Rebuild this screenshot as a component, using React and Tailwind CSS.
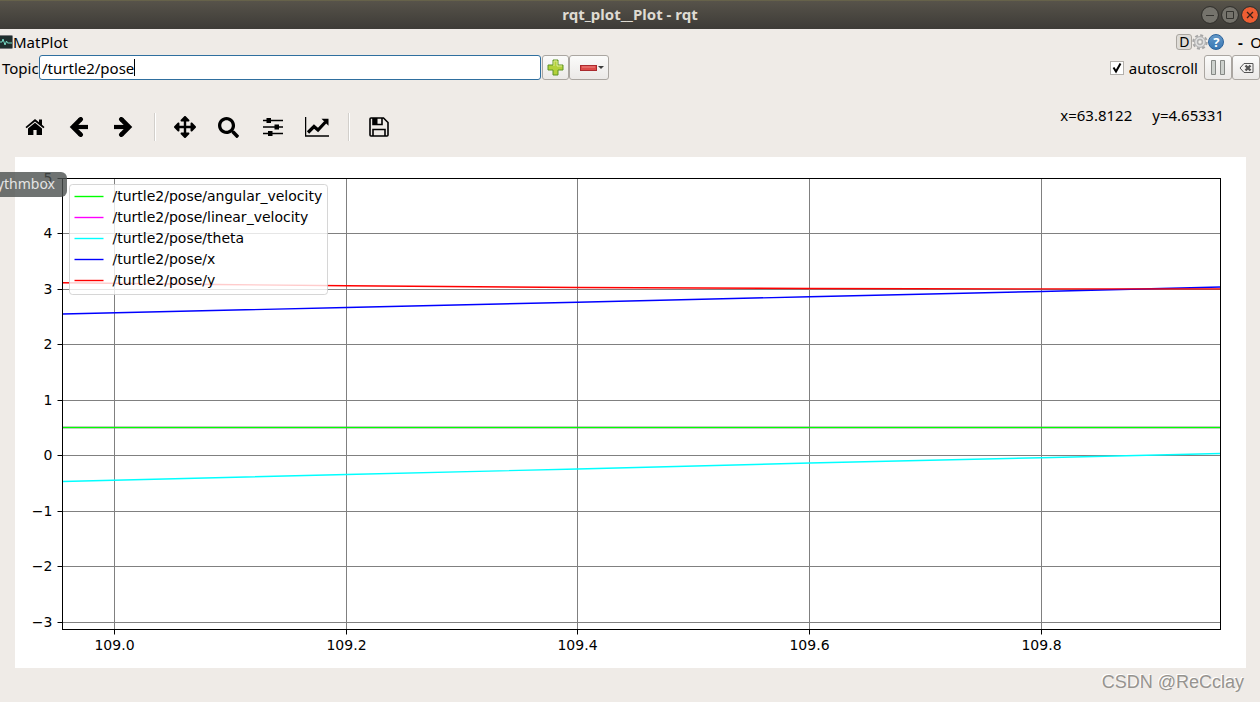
import { FaArrowsAlt, FaSearch } from 'react-icons/fa';

const xTicks = [
  { label: '109.0', x: 99 },
  { label: '109.2', x: 331 },
  { label: '109.4', x: 562 },
  { label: '109.6', x: 794 },
  { label: '109.8', x: 1026 },
];

const yTicks = [
  { label: '5', y: 21 },
  { label: '4', y: 76 },
  { label: '3', y: 132 },
  { label: '2', y: 187 },
  { label: '1', y: 243 },
  { label: '0', y: 298 },
  { label: '−1', y: 354 },
  { label: '−2', y: 409 },
  { label: '−3', y: 465 },
];

const series = [
  { name: '/turtle2/pose/linear_velocity', color: '#ff00ff', points: '47,270 1205,270' },
  { name: '/turtle2/pose/angular_velocity', color: '#00ff00', points: '47,270 1205,270' },
  { name: '/turtle2/pose/theta', color: '#00ffff', points: '47,324 331,317 562,311.5 794,305.5 1026,300.2 1205,296' },
  { name: '/turtle2/pose/x', color: '#0000ff', points: '47,156.5 331,150 562,144.7 794,139.2 1026,134 1205,129.5' },
  { name: '/turtle2/pose/y', color: '#ff0000', points: '47,125.3 200,127 331,128.2 562,130 794,131 1026,131.4 1205,131.4' },
];

const legend = [
  { name: '/turtle2/pose/angular_velocity', color: '#00ff00' },
  { name: '/turtle2/pose/linear_velocity', color: '#ff00ff' },
  { name: '/turtle2/pose/theta', color: '#00ffff' },
  { name: '/turtle2/pose/x', color: '#0000ff' },
  { name: '/turtle2/pose/y', color: '#ff0000' },
];

function HomeIcon() {
  return (
    <svg width="20" height="18" viewBox="0 0 20 18">
      <path d="M10 1 L0.5 9 L1.6 10.2 L10 3.4 L18.4 10.2 L19.5 9 L17 6.8 V1.5 H14 V4.3 Z" />
      <path d="M10 4.8 L3 10.4 V17 H8.4 V12 H11.6 V17 H17 V10.4 Z" />
    </svg>
  );
}

function ArrowIcon({ className }) {
  return (
    <svg className={className} width="20" height="20" viewBox="0 0 20 20" fill="none" stroke="#000" strokeWidth="4.6">
      <path d="M3 10H19" strokeWidth="4.2" />
      <path d="M11.8 2.2L4 10L11.8 17.8" />
      <path d="M11.6 2.4L11.8 2.2M11.6 17.6L11.8 17.8" strokeLinecap="round" strokeWidth="4.4" />
    </svg>
  );
}

function SlidersIcon() {
  return (
    <svg width="20" height="18" viewBox="0 0 20 18">
      <path d="M0 2.5H20M0 9H20M0 15.5H20" stroke="#000" strokeWidth="1.5" />
      <path d="M3.5 0h4.5v5H3.5zM11.5 6.5H16v5h-4.5zM5 13h4.5v5H5z" />
    </svg>
  );
}

function ChartIcon() {
  return (
    <svg width="24" height="20" viewBox="0 0 24 20" fill="none" stroke="#000">
      <path d="M0.5 0V19H24" strokeWidth="1.5" />
      <path d="M3 15.5 L9 9.5 L13 13 L20.5 5" strokeWidth="3.2" />
      <path d="M16.5 1.8H23.5V8.8Z" fill="#000" stroke="none" />
    </svg>
  );
}

function SaveIcon() {
  return (
    <svg width="20" height="20" viewBox="0 0 20 20" fill="none" stroke="#000" strokeWidth="1.6">
      <path d="M1 2Q1 1 2 1H14.5L19 5.5V18Q19 19 18 19H2Q1 19 1 18Z" />
      <path d="M4 1V7.5H13V1M4 19V12.5H16V19" />
      <path d="M4 1H8.5V7H4Z" fill="#000" stroke="none" />
    </svg>
  );
}

function TitleBar() {
  return (
    <header className="grid h-[29px] grid-cols-[1fr_auto_1fr] items-center border-t border-[#66624a] bg-gradient-to-b from-[#57534a] to-[#3d3b37]">
      <span />
      <h1 className="pb-0.5 text-[15px] leading-5 font-bold text-[#dfdbd2]">rqt_plot__Plot - rqt</h1>
      <div className="flex justify-end gap-1 pr-0.5 pb-px">
        <button aria-label="Minimize" className="flex size-4 items-center justify-center rounded-full bg-[#75736c] outline outline-[#33322e]">
          <svg width="16" height="16" viewBox="0 0 16 16" stroke="#33322e"><path d="M4 8.5h8" /></svg>
        </button>
        <button aria-label="Maximize" className="flex size-4 items-center justify-center rounded-full bg-[#75736c] outline outline-[#33322e]">
          <svg width="16" height="16" viewBox="0 0 16 16" fill="none" stroke="#33322e"><path d="M4.5 4.5h7v7h-7z" /></svg>
        </button>
        <button aria-label="Close" className="flex size-4 items-center justify-center rounded-full bg-[#ee5e33] outline outline-[#33322e]">
          <svg width="16" height="16" viewBox="0 0 16 16" stroke="#3a2018" strokeWidth="1.3"><path d="M5 5l6 6M11 5l-6 6" /></svg>
        </button>
      </div>
    </header>
  );
}

function DockBar() {
  return (
    <div className="flex h-[26px] items-center">
      <svg className="-ml-1 shrink-0" width="17" height="14" viewBox="0 0 17 14">
        <rect x="0.5" y="0.5" width="16" height="13" rx="1" fill="#1f2e2e" stroke="#77777a" />
        <path d="M1 7h5l1-3 2 6 1.5-4 1 2H16" fill="none" stroke="#76d8c4" />
      </svg>
      <h2 className="text-[15px] leading-5">MatPlot</h2>
      <div className="ml-auto flex items-center">
        <button className="flex size-4 items-center justify-center rounded-[3px] border border-[#aaa6a0] bg-[#dfdcd8] text-[14px] leading-4">D</button>
        <button aria-label="Settings">
          <svg width="16" height="16" viewBox="0 0 16 16" fill="none">
            <circle cx="8" cy="8" r="6.7" stroke="#a6a6a6" strokeWidth="2" strokeDasharray="3 2.26" />
            <circle cx="8" cy="8" r="5.4" fill="#dedede" stroke="#acacac" />
            <circle cx="8" cy="8" r="2.4" fill="#f0eeea" stroke="#b0b0b0" strokeWidth="1.5" />
          </svg>
        </button>
        <button aria-label="Help" className="flex size-4 items-center justify-center rounded-full border border-[#2a629b] bg-gradient-to-b from-[#6398c8] to-[#3a78b4] text-[13px] leading-4 font-bold text-white">?</button>
        <button className="ml-3 w-2 text-[15px] leading-5 font-bold">-</button>
        <button className="-mr-0.5 ml-1.5 text-[15px] leading-5">O</button>
      </div>
    </div>
  );
}

function TopicBar() {
  return (
    <div className="flex h-[25px] items-center pl-0.5">
      <label htmlFor="topic" className="w-[37px] text-[15px] leading-5">Topic</label>
      <div className="flex h-[25px] w-[502px] items-center rounded-[3px] border border-[#2f6f9f] bg-white pl-0.5">
        <input id="topic" type="text" defaultValue="/turtle2/pose" className="field-sizing-content text-[15px] leading-5 outline-none" />
        <span className="h-[17px] w-px bg-black" />
      </div>
      <button aria-label="Add topic" className="ml-px flex h-[25px] w-[27px] items-center justify-center rounded-[3px] border border-[#aaa6a1] bg-gradient-to-b from-[#fbfbfa] to-[#ebe9e7]">
        <svg width="17" height="17" viewBox="0 0 17 17">
          <path d="M6 1h5v5h5v5h-5v5H6v-5H1V6h5z" fill="#b3d13a" stroke="#5f9424" strokeLinejoin="round" />
          <path d="M7 7V2h3v5h5" fill="none" stroke="#dbea94" />
        </svg>
      </button>
      <button aria-label="Remove topic" className="flex h-[25px] w-10 items-center justify-end rounded-[3px] border border-[#aaa6a1] bg-gradient-to-b from-[#fbfbfa] to-[#ebe9e7] pr-1">
        <svg width="17" height="6" viewBox="0 0 17 6">
          <rect x="0.5" y="0.5" width="16" height="5" fill="#dc4a48" stroke="#a92a2e" />
          <path d="M2 2h13" stroke="#ee8582" />
        </svg>
        <svg className="ml-px" width="6" height="6" viewBox="0 0 6 6"><path d="M0 1h6L3 4z" fill="#3c3c3c" /></svg>
      </button>

      <div className="ml-auto flex items-center">
        <span className="grid size-[14px]">
          <input id="autoscroll" type="checkbox" defaultChecked className="col-start-1 row-start-1 size-[14px] appearance-none border border-[#b3b0ac] bg-white" />
          <svg className="pointer-events-none col-start-1 row-start-1" width="14" height="14" viewBox="0 0 14 14" fill="none" stroke="#000" strokeWidth="2">
            <path d="M3.5 6.5l2.5 4 4.5-8" />
          </svg>
        </span>
        <label htmlFor="autoscroll" className="ml-[5px] text-[15px] leading-5">autoscroll</label>
        <button aria-label="Pause" className="ml-1.5 flex h-[25px] w-7 items-center justify-center rounded-[3px] border border-[#aaa6a1] bg-gradient-to-b from-[#fbfbfa] to-[#ebe9e7]">
          <svg width="16" height="15" viewBox="0 0 16 15" fill="#cdd1cd" stroke="#858885">
            <path d="M1.5 0.5h4v14h-4zM10.5 0.5h4v14h-4z" />
          </svg>
        </button>
        <button aria-label="Clear plot" className="flex h-[25px] w-7 items-center justify-center rounded-[3px] border border-[#aaa6a1] bg-gradient-to-b from-[#fbfbfa] to-[#ebe9e7]">
          <svg width="15" height="12" viewBox="0 0 15 12" fill="none" stroke="#555">
            <path d="M5 1.5h9v9H5L1 6z" />
            <path d="M6.5 3.5l5 5M11.5 3.5l-5 5" strokeWidth="2.4" />
          </svg>
        </button>
      </div>
    </div>
  );
}

function PlotToolbar() {
  return (
    <div className="flex h-[77px] items-start justify-between pt-[25px] pr-9 pl-[25px]">
      <div className="flex h-11 items-center">
        <button aria-label="Home"><HomeIcon /></button>
        <button aria-label="Back" className="ml-6"><ArrowIcon /></button>
        <button aria-label="Forward" className="ml-6"><ArrowIcon className="rotate-180" /></button>
        <span className="ml-[21px] h-7 w-0.5 border-l border-[#d2cfcb] bg-white" />
        <button aria-label="Pan" className="ml-[18px]"><FaArrowsAlt size={22} /></button>
        <button aria-label="Zoom" className="ml-[22px]"><FaSearch size={21} /></button>
        <button aria-label="Subplots" className="ml-6"><SlidersIcon /></button>
        <button aria-label="Axes" className="ml-[22px]"><ChartIcon /></button>
        <span className="ml-[19px] h-7 w-0.5 border-l border-[#d2cfcb] bg-white" />
        <button aria-label="Save" className="ml-[19px]"><SaveIcon /></button>
      </div>
      <p className="flex gap-5 text-[15px] leading-5">
        <span>x=63.8122</span>
        <span>y=4.65331</span>
      </p>
    </div>
  );
}

function Plot() {
  return (
    <svg className="block h-auto w-full bg-white" viewBox="0 0 1231 511" fontFamily="'DejaVu Sans', sans-serif" fontSize="14">
      <g transform="translate(0.5 0.5)">
        {/* Grid */}
        <g stroke="#808080">
          {xTicks.map((t) => <path key={t.label} d={`M${t.x} 21V472`} />)}
          {yTicks.map((t) => <path key={t.label} d={`M47 ${t.y}H1205`} />)}
        </g>

        {/* Data */}
        {series.map((s) => (
          <polyline key={s.name} points={s.points} fill="none" stroke={s.color} strokeWidth="1.4" />
        ))}

        {/* Axes */}
        <g stroke="#000">
          <rect x="47" y="21" width="1158" height="451" fill="none" />
          {xTicks.map((t) => <path key={t.label} d={`M${t.x} 472v5`} />)}
          {yTicks.map((t) => <path key={t.label} d={`M42 ${t.y}h5`} />)}
        </g>
        {xTicks.map((t) => <text key={t.label} x={t.x} y="492" textAnchor="middle">{t.label}</text>)}
        {yTicks.map((t) => <text key={t.label} x="37" y={t.y + 4} textAnchor="end">{t.label}</text>)}

        {/* Legend */}
        <rect x="54" y="27" width="258" height="110" rx="3" fill="#fff" fillOpacity="0.8" stroke="#ccc" strokeOpacity="0.8" />
        {legend.map((item, i) => (
          <g key={item.name}>
            <path d={`M59 ${39 + i * 21}h29`} stroke={item.color} strokeWidth="1.4" />
            <text x="97" y={43 + i * 21}>{item.name}</text>
          </g>
        ))}
      </g>
    </svg>
  );
}

function App() {
  return (
    <div className="relative min-h-screen overflow-hidden bg-[#efebe7] font-['Noto_Sans','Open_Sans',sans-serif] text-black">
      <TitleBar />
      <DockBar />
      <TopicBar />
      <PlotToolbar />
      <main className="pr-3.5 pl-[15px]">
        <Plot />
      </main>
      <footer className="flex justify-end pt-0.5 pr-4 font-['Liberation_Sans',sans-serif] text-[18px] leading-6 text-[#96938f] [text-shadow:-1px_-1px_0_#fff]">
        CSDN @ReCclay
      </footer>

      {/* Launcher tooltip */}
      <div role="tooltip" className="absolute top-[172px] left-0 flex h-[25px] w-[67px] items-center justify-end overflow-hidden rounded-r-md bg-[#4b504f]/80 pr-3 pb-0.5 text-[14px] leading-5 text-[#e4e4e4]">
        ythmbox
      </div>
    </div>
  );
}

export default App;
